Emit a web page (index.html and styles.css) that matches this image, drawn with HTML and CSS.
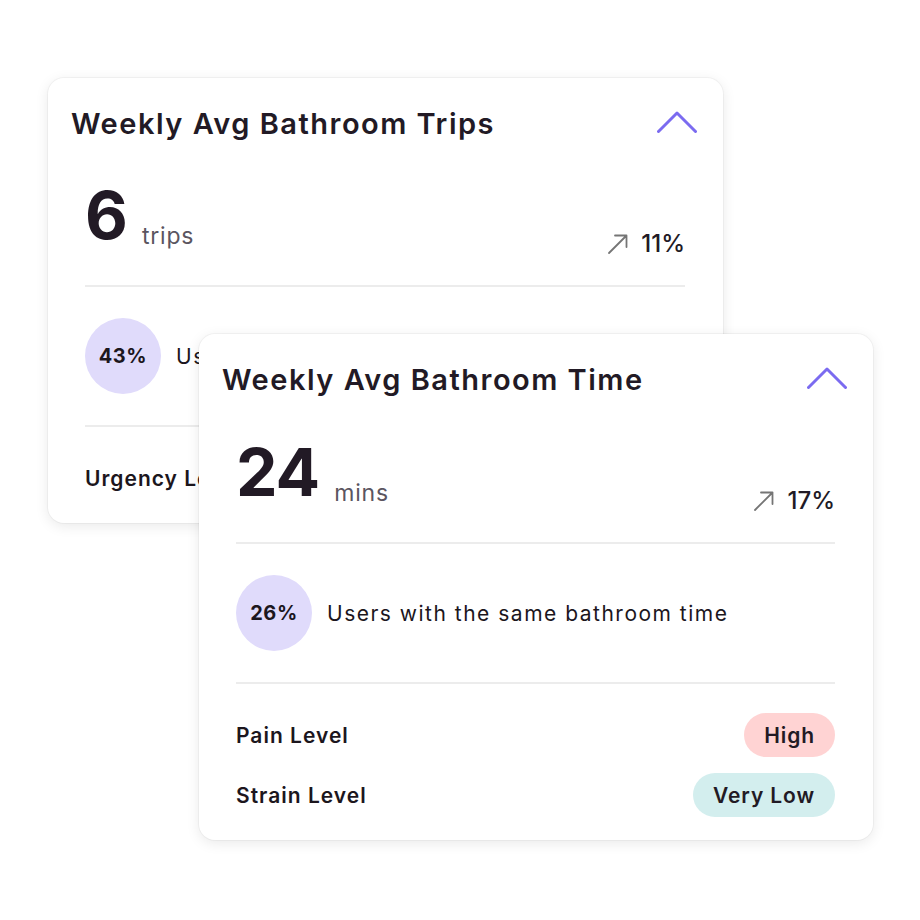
FILE: index.html
```html
<!DOCTYPE html>
<html lang="en">
<head>
<meta charset="utf-8">
<title>Weekly Averages</title>
<link rel="stylesheet" href="styles.css">
</head>
<body>
<div class="stage">
  <section class="card card-back">
    <header class="card-head">
      <h2 class="card-title">Weekly Avg Bathroom Trips</h2>
      <svg class="chevron" width="40" height="22" viewBox="0 0 40 22"><path d="M1.5 20.5 L20 2 L38.5 20.5" fill="none" stroke="#7b6bf0" stroke-width="3" stroke-linecap="round" stroke-linejoin="round"/></svg>
    </header>
    <div class="stat-row">
      <div class="stat-main"><span class="stat-num">6</span><span class="stat-unit">trips</span></div>
      <div class="stat-change">
        <svg class="trend" width="22" height="22" viewBox="0 0 22 22"><path d="M2 20 L19.5 2.5 M8 2.5 H19.5 V14" fill="none" stroke="#757575" stroke-width="1.8" stroke-linecap="round" stroke-linejoin="round"/></svg>
        <span class="stat-pct">11%</span>
      </div>
    </div>
    <div class="compare-row">
      <div class="bubble">43%</div>
      <span class="compare-text">Users with the same number of trips</span>
    </div>
    <div class="levels">
      <div class="level-row"><span class="level-name">Urgency Level</span><span class="pill pill-mid">Medium</span></div>
    </div>
  </section>

  <section class="card card-front">
    <header class="card-head">
      <h2 class="card-title">Weekly Avg Bathroom Time</h2>
      <svg class="chevron" width="40" height="22" viewBox="0 0 40 22"><path d="M1.5 20.5 L20 2 L38.5 20.5" fill="none" stroke="#7b6bf0" stroke-width="3" stroke-linecap="round" stroke-linejoin="round"/></svg>
    </header>
    <div class="stat-row">
      <div class="stat-main"><span class="stat-num">24</span><span class="stat-unit">mins</span></div>
      <div class="stat-change">
        <svg class="trend" width="22" height="22" viewBox="0 0 22 22"><path d="M2 20 L19.5 2.5 M8 2.5 H19.5 V14" fill="none" stroke="#757575" stroke-width="1.8" stroke-linecap="round" stroke-linejoin="round"/></svg>
        <span class="stat-pct">17%</span>
      </div>
    </div>
    <div class="compare-row">
      <div class="bubble">26%</div>
      <span class="compare-text">Users with the same bathroom time</span>
    </div>
    <div class="levels">
      <div class="level-row"><span class="level-name">Pain Level</span><span class="pill pill-high">High</span></div>
      <div class="level-row"><span class="level-name">Strain Level</span><span class="pill pill-low">Very Low</span></div>
    </div>
  </section>
</div>
</body>
</html>
```
FILE: styles.css
```css
* { box-sizing: border-box; }
html, body { margin: 0; padding: 0; background: #ffffff; }
body {
  font-family: "Inter", "Noto Sans", sans-serif;
  color: #221a24;
}
.stage {
  position: relative;
  width: 920px;
  height: 920px;
  padding: 78px 0 0 48px;
}
.card {
  background: #ffffff;
  border-radius: 16px;
  box-shadow: 0 0 0 1px rgba(0,0,0,0.035), 0 3px 14px rgba(0,0,0,0.09);
  padding: 28px 38px 23px 37px;
  display: flex;
  flex-direction: column;
}
.card-back { width: 675px; height: 445px; overflow: hidden; }
.card-front {
  position: absolute;
  left: 199px;
  top: 334px;
  width: 674px;
  height: 506px;
}
.card-head {
  display: flex;
  align-items: center;
  justify-content: space-between;
  height: 36px;
  margin: 0 -12px 0 -14px;
}
.card-title {
  margin: 0;
  font-size: 29px;
  font-weight: 600;
  line-height: 36px;
  letter-spacing: 1.5px;
  color: #221a25;
}
.chevron { display: block; margin-top: -4px; }
.stat-row {
  height: 146px;
  display: flex;
  align-items: flex-end;
  justify-content: space-between;
  padding-bottom: 40px;
  border-bottom: 2px solid #ececec;
}
.stat-main { display: flex; align-items: baseline; }
.stat-num {
  font-size: 66px;
  font-weight: 700;
  line-height: 60px;
  letter-spacing: -1px;
  color: #221a25;
}
.stat-unit {
  font-size: 23px;
  font-weight: 400;
  letter-spacing: 0.8px;
  color: #5b5560;
  margin-left: 15px;
  position: relative;
  top: 5px;
}
.stat-change { display: flex; align-items: center; gap: 12px; margin-bottom: -14px; }
.trend { display: block; }
.stat-pct { font-size: 24px; font-weight: 500; color: #221a25; line-height: 30px; }
.compare-row {
  display: flex;
  align-items: center;
  gap: 15px;
  padding: 31px 0;
  border-bottom: 2px solid #ececec;
}
.bubble {
  width: 76px;
  height: 76px;
  border-radius: 50%;
  background: #e0dbfb;
  display: flex;
  align-items: center;
  justify-content: center;
  font-size: 20px;
  font-weight: 700;
  letter-spacing: 0.6px;
  color: #1c161d;
}
.compare-text {
  font-size: 21px;
  font-weight: 400;
  letter-spacing: 1.5px;
  color: #1c161d;
  white-space: nowrap;
}
.levels {
  padding-top: 29px;
  display: flex;
  flex-direction: column;
  gap: 16px;
}
.level-row {
  display: flex;
  align-items: center;
  justify-content: space-between;
  height: 44px;
}
.level-name { font-size: 21px; font-weight: 600; letter-spacing: 1px; color: #1c161d; }
.pill {
  height: 44px;
  border-radius: 22px;
  padding: 0 20px;
  display: flex;
  align-items: center;
  font-size: 21px;
  font-weight: 600;
  letter-spacing: 0.9px;
  color: #221a24;
}
.pill-high { background: #ffd3d3; }
.pill-low { background: #d3eeee; }
.pill-mid { background: #fde9c9; }
```
